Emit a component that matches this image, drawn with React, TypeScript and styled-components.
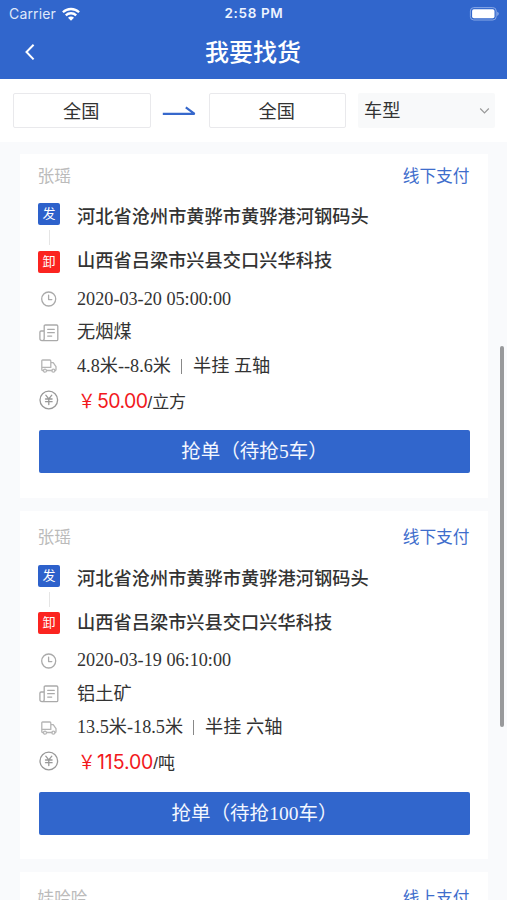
import React from 'react';
import styled, { createGlobalStyle } from 'styled-components';

const GlobalStyle = createGlobalStyle`
  * { box-sizing: border-box; }
  html, body { margin: 0; height: 900px; overflow: hidden; background: #f9fafc; }
  body { font-family: "Liberation Serif", "Noto Sans CJK SC", serif; color: #333; }
`;

const Screen = styled.div`
  position: relative;
  width: 507px;
  height: 900px;
  overflow: hidden;
  background: #f9fafc;
`;

const Header = styled.header`
  height: 79px;
  background: #3166cc;
  color: #fff;
`;

const StatusBar = styled.div`
  display: grid;
  grid-template-columns: 1fr auto 1fr;
  align-items: center;
  height: 27px;
  padding: 0 8px 0 9px;
  font: 500 13px/27px Inter, sans-serif;
`;

const Carrier = styled.div`
  display: flex;
  align-items: center;
  gap: 6px;
  font-size: 14px;
  font-weight: 400;
  color: #dfe8fa;
  letter-spacing: 0.15px;
`;

const Time = styled.div`
  font-size: 13.5px;
  font-weight: 600;
  letter-spacing: 0.65px;
  color: #edf3ff;
`;

const BatteryIcon = styled.svg`
  justify-self: end;
`;

const NavBar = styled.div`
  display: grid;
  grid-template-columns: 60px 1fr 60px;
  align-items: center;
  height: 50px;
`;

const BackIcon = styled.svg`
  margin-left: 24px;
`;

const Title = styled.h1`
  margin: 0 1px 3px 0;
  text-align: center;
  font: 500 24px/46px "Noto Sans CJK SC", sans-serif;
`;

const Filters = styled.div`
  display: flex;
  align-items: flex-start;
  height: 63px;
  padding: 14px 12px 0 13px;
  background: #fff;
`;

const Place = styled.div`
  width: 137.5px;
  height: 35px;
  border: 1px solid #e9e9ec;
  border-radius: 2px;
  text-align: center;
  font-size: 18.2px;
  line-height: 36px;
  text-indent: -1px;
`;

const ArrowIcon = styled.svg`
  margin: 12px 12px 0 11px;
`;

const TypeSelect = styled.div`
  display: flex;
  align-items: center;
  justify-content: space-between;
  width: 137px;
  height: 35px;
  margin-left: 12px;
  padding: 0 5px 0 6px;
  border-radius: 2px;
  background: #f8f9fa;
  font-size: 18.2px;
  line-height: 38px;
`;

const TypeLabel = styled.span`
  padding-top: 1px;
`;

const List = styled.main`
  display: flex;
  flex-direction: column;
  gap: 12.5px;
  padding: 11.5px 19px 0 20px;
`;

const Card = styled.article`
  flex: none;
  height: 348.5px;
  padding: 15.5px 18px 0;
  background: #fff;

  &:first-child {
    height: 344.5px;
    padding-top: 11px;
  }
`;

const CardTop = styled.div`
  display: flex;
  justify-content: space-between;
  height: 24px;
  margin: 0 0.5px 14.5px -0.5px;
  font-size: 16.7px;
  line-height: 24px;
`;

const Owner = styled.span`
  color: #bbb;
`;

const Pay = styled.span`
  color: #3e6dcc;
`;

const Route = styled.div`
  display: grid;
  grid-template-columns: 22px 1fr;
  column-gap: 17px;
  height: 79.5px;
`;

const Stops = styled.div`
  display: flex;
  flex-direction: column;
  align-items: center;
`;

const Badge = styled.span<{ $color: string }>`
  width: 22px;
  height: 22px;
  border-radius: 2px;
  background: ${(p) => p.$color};
  color: #fff;
  text-align: center;
  font-size: 13px;
  line-height: 22px;
`;

const Connector = styled.span`
  width: 1px;
  height: 15px;
  margin: 5px 0 5.5px;
  background: #e5e5e5;
`;

const Addresses = styled.div`
  display: flex;
  flex-direction: column;
  margin-top: -0.8px;
  font: 500 18.2px/26px "Noto Sans CJK SC", sans-serif;
  letter-spacing: 0.04px;
  gap: 18px;
`;

const Detail = styled.div`
  display: grid;
  grid-template-columns: 22px 1fr;
  grid-template-rows: 33.5px;
  column-gap: 17px;
  align-items: center;
  height: 33.5px;
  font-size: 18.2px;
  line-height: 33px;
  white-space: pre;

  svg { justify-self: center; }
`;

const Divider = styled.span`
  display: inline-block;
  width: 1px;
  height: 15px;
  margin: 0 11px 0 10px;
  background: #888;
  vertical-align: -2px;
`;

const PriceLine = styled.div`
  display: flex;
  align-items: baseline;
  height: 33px;
  margin-top: -1px;
  font-size: 17px;
`;

const Yen = styled.span`
  width: 18px;
  margin-left: 1px;
  color: #f2191d;
  font: 400 19.5px/33px "Noto Sans CJK SC", sans-serif;
  transform: scaleX(0.9);
  transform-origin: left;
`;

const Amount = styled.span<{ $tracking: number }>`
  margin-left: 1px;
  color: #f2191d;
  font: 400 19.5px/33px Inter, sans-serif;
  letter-spacing: ${(p) => p.$tracking}px;
`;

const Slash = styled.span`
  font: 400 17px/33px "Liberation Sans", sans-serif;
`;

const GrabButton = styled.button`
  display: block;
  width: 431px;
  height: 43px;
  margin: 13.5px 0 0 1px;
  padding: 0;
  border: 0;
  border-radius: 2px;
  background: #3166cc;
  color: #f3f7ff;
  font: 400 19.5px/44px "Liberation Serif", "Noto Sans CJK SC", serif;
`;

const ScrollThumb = styled.div`
  position: absolute;
  top: 346px;
  right: 3px;
  width: 4px;
  height: 381px;
  border-radius: 2px;
  background: #98999b;
`;

const line = { fill: 'none', stroke: '#aaa', strokeWidth: 1.3, strokeLinecap: 'round' as const, strokeLinejoin: 'round' as const };

const ClockIcon = () => (
  <svg width="16" height="16" viewBox="0 0 16 16" {...line}>
    <circle cx="7.7" cy="8" r="7" />
    <path d="M7.6 4.2V8.6H10.8" />
  </svg>
);

const CargoIcon = () => (
  <svg width="20" height="18" viewBox="0 0 20 18" {...line}>
    <path d="M5.2 14.4V2.2Q5.2 1 6.4 1H17.6Q18.8 1 18.8 2.2V15.4Q18.8 16.6 17.6 16.6H3Q.9 16.6.9 14.4V8.2Q.9 7 2.1 7H5.2V14.4Q5.2 16.6 3 16.6" />
    <path d="M8.7 5.3h6.6M8.7 8.7h6.6M8.7 12.1h4" />
  </svg>
);

const TruckIcon = () => (
  <svg width="16" height="14" viewBox="0 0 16 14" {...line} stroke="#b5b5b5">
    <path d="M2.3 11.5H1.6Q.8 11.5.8 10.7V1.8Q.8 1 1.6 1H8.8Q9.8 1 9.8 2V8.4H.8M9.8 3.6h2.4l2.8 4v3q0 .9-.8.9M10.8 11.5H5.8" />
    <circle cx="4" cy="11.7" r="1.5" />
    <circle cx="12.4" cy="11.7" r="1.5" />
  </svg>
);

const PriceIcon = () => (
  <svg width="20" height="20" viewBox="0 0 20 20" {...line} stroke="#999">
    <circle cx="9.8" cy="10" r="8.8" />
    <path d="M6.8 5.2 9.8 8.8l3-3.6M6.5 9h6.6M6.5 11.7h6.6M9.8 9v5.6" />
  </svg>
);

interface Order {
  owner: string;
  pay: string;
  date: string;
  cargo: string;
  length: string;
  truck: string;
  price: string;
  tracking: number;
  unit: string;
  left: number;
}

const orders: Order[] = [
  { owner: '张瑶', pay: '线下支付', date: '2020-03-20 05:00:00', cargo: '无烟煤', length: '4.8米--8.6米', truck: '半挂 五轴', price: '50.00', tracking: -0.6, unit: '立方', left: 5 },
  { owner: '张瑶', pay: '线下支付', date: '2020-03-19 06:10:00', cargo: '铝土矿', length: '13.5米-18.5米', truck: '半挂 六轴', price: '115.00', tracking: -0.1, unit: '吨', left: 100 },
];

const OrderCard = ({ order }: { order: Order }) => (
  <Card>
    <CardTop>
      <Owner>{order.owner}</Owner>
      <Pay>{order.pay}</Pay>
    </CardTop>
    <Route>
      <Stops>
        <Badge $color="#2d61cb">发</Badge>
        <Connector />
        <Badge $color="#fb2420">卸</Badge>
      </Stops>
      <Addresses>
        <span>河北省沧州市黄骅市黄骅港河钢码头</span>
        <span>山西省吕梁市兴县交口兴华科技</span>
      </Addresses>
    </Route>
    <Detail><ClockIcon /><span>{order.date}</span></Detail>
    <Detail><CargoIcon /><span>{order.cargo}</span></Detail>
    <Detail><TruckIcon /><span>{order.length}<Divider />{order.truck}</span></Detail>
    <Detail>
      <PriceIcon />
      <PriceLine>
        <Yen>￥</Yen>
        <Amount $tracking={order.tracking}>{order.price}</Amount>
        <Slash>/</Slash>
        <span>{order.unit}</span>
      </PriceLine>
    </Detail>
    <GrabButton>抢单（待抢{order.left}车）</GrabButton>
  </Card>
);

export default function App() {
  return (
    <>
      <GlobalStyle />
      <Screen>
        <Header>
          <StatusBar>
            <Carrier>
              Carrier
              <svg width="18" height="14" viewBox="0 0 18 14" fill="none" stroke="#fff" strokeWidth="2.3">
                <path d="M.9 5.3a11.6 11.6 0 0 1 16.2 0M3.8 8.4a7.4 7.4 0 0 1 10.4 0" />
                <path d="M6 10.7a4.2 4.2 0 0 1 6 0L9 13.8z" fill="#fff" stroke="none" />
              </svg>
            </Carrier>
            <Time>2:58 PM</Time>
            <BatteryIcon width="30" height="14" viewBox="0 0 30 14">
              <rect x="1.4" y=".6" width="25.8" height="12.4" rx="3.4" fill="none" stroke="#88a8e6" />
              <rect x="3.1" y="2.3" width="22.4" height="9" rx="1.8" fill="#fff" />
              <path d="M28.2 4.7q1.6.6 1.6 2.1t-1.6 2.1z" fill="#88a8e6" />
            </BatteryIcon>
          </StatusBar>
          <NavBar>
            <BackIcon width="12" height="18" viewBox="0 0 12 18" fill="none" stroke="#fff" strokeWidth="2">
              <path d="M9.6 1.8 2.5 9l7.1 7.4" />
            </BackIcon>
            <Title>我要找货</Title>
          </NavBar>
        </Header>
        <Filters>
          <Place>全国</Place>
          <ArrowIcon width="35" height="11" viewBox="0 0 35 11" fill="none" stroke="#3668cc" strokeWidth="2.2">
            <path d="M.8 8.8H32.6L23.8 2.4" strokeLinejoin="bevel" />
          </ArrowIcon>
          <Place>全国</Place>
          <TypeSelect>
            <TypeLabel>车型</TypeLabel>
            <svg width="11" height="8" viewBox="0 0 11 8" fill="none" stroke="#999" strokeWidth="1.2">
              <path d="m1.2 1.5 4.3 4.3 4.3-4.3" />
            </svg>
          </TypeSelect>
        </Filters>
        <List>
          {orders.map((order) => <OrderCard key={order.date} order={order} />)}
          <Card>
            <CardTop>
              <Owner>娃哈哈</Owner>
              <Pay>线上支付</Pay>
            </CardTop>
          </Card>
        </List>
        <ScrollThumb />
      </Screen>
    </>
  );
}
